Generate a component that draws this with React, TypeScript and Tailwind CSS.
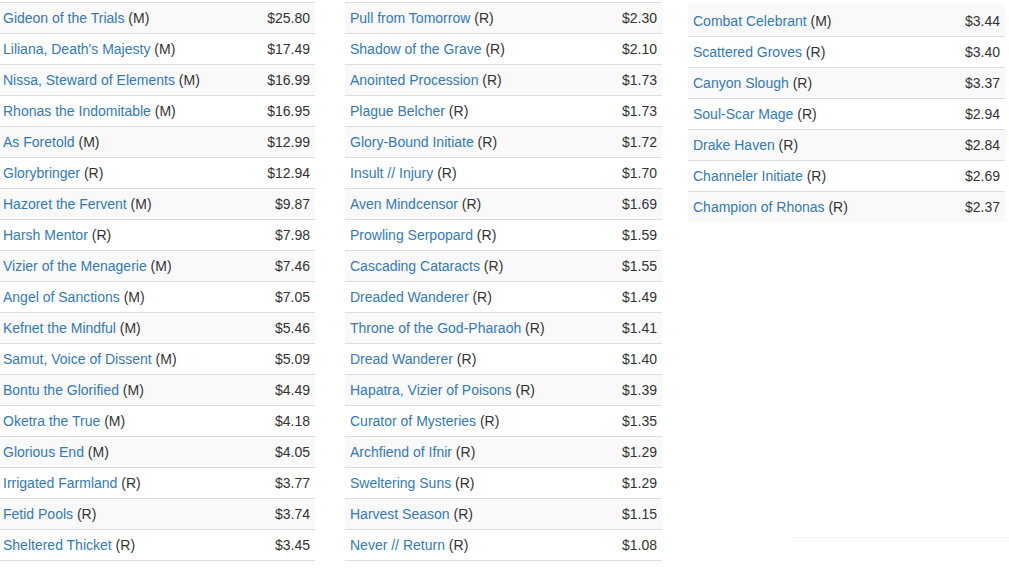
import React from "react";

type Card = { name: string; rarity: string; price: string };

const left: Card[] = [
  { name: "Gideon of the Trials", rarity: "M", price: "$25.80" },
  { name: "Liliana, Death's Majesty", rarity: "M", price: "$17.49" },
  { name: "Nissa, Steward of Elements", rarity: "M", price: "$16.99" },
  { name: "Rhonas the Indomitable", rarity: "M", price: "$16.95" },
  { name: "As Foretold", rarity: "M", price: "$12.99" },
  { name: "Glorybringer", rarity: "R", price: "$12.94" },
  { name: "Hazoret the Fervent", rarity: "M", price: "$9.87" },
  { name: "Harsh Mentor", rarity: "R", price: "$7.98" },
  { name: "Vizier of the Menagerie", rarity: "M", price: "$7.46" },
  { name: "Angel of Sanctions", rarity: "M", price: "$7.05" },
  { name: "Kefnet the Mindful", rarity: "M", price: "$5.46" },
  { name: "Samut, Voice of Dissent", rarity: "M", price: "$5.09" },
  { name: "Bontu the Glorified", rarity: "M", price: "$4.49" },
  { name: "Oketra the True", rarity: "M", price: "$4.18" },
  { name: "Glorious End", rarity: "M", price: "$4.05" },
  { name: "Irrigated Farmland", rarity: "R", price: "$3.77" },
  { name: "Fetid Pools", rarity: "R", price: "$3.74" },
  { name: "Sheltered Thicket", rarity: "R", price: "$3.45" },
];

const middle: Card[] = [
  { name: "Pull from Tomorrow", rarity: "R", price: "$2.30" },
  { name: "Shadow of the Grave", rarity: "R", price: "$2.10" },
  { name: "Anointed Procession", rarity: "R", price: "$1.73" },
  { name: "Plague Belcher", rarity: "R", price: "$1.73" },
  { name: "Glory-Bound Initiate", rarity: "R", price: "$1.72" },
  { name: "Insult // Injury", rarity: "R", price: "$1.70" },
  { name: "Aven Mindcensor", rarity: "R", price: "$1.69" },
  { name: "Prowling Serpopard", rarity: "R", price: "$1.59" },
  { name: "Cascading Cataracts", rarity: "R", price: "$1.55" },
  { name: "Dreaded Wanderer", rarity: "R", price: "$1.49" },
  { name: "Throne of the God-Pharaoh", rarity: "R", price: "$1.41" },
  { name: "Dread Wanderer", rarity: "R", price: "$1.40" },
  { name: "Hapatra, Vizier of Poisons", rarity: "R", price: "$1.39" },
  { name: "Curator of Mysteries", rarity: "R", price: "$1.35" },
  { name: "Archfiend of Ifnir", rarity: "R", price: "$1.29" },
  { name: "Sweltering Suns", rarity: "R", price: "$1.29" },
  { name: "Harvest Season", rarity: "R", price: "$1.15" },
  { name: "Never // Return", rarity: "R", price: "$1.08" },
];

const right: Card[] = [
  { name: "Combat Celebrant", rarity: "M", price: "$3.44" },
  { name: "Scattered Groves", rarity: "R", price: "$3.40" },
  { name: "Canyon Slough", rarity: "R", price: "$3.37" },
  { name: "Soul-Scar Mage", rarity: "R", price: "$2.94" },
  { name: "Drake Haven", rarity: "R", price: "$2.84" },
  { name: "Channeler Initiate", rarity: "R", price: "$2.69" },
  { name: "Champion of Rhonas", rarity: "R", price: "$2.37" },
];

const PriceTable = ({ cards, pl, bordered }: { cards: Card[]; pl: string; bordered: boolean }) => {
  return (
    <div className={bordered ? "border-b border-[#ddd]" : ""}>
      {cards.map((c, i) => (
        <div
          key={c.name}
          className={`flex h-[31px] items-center justify-between pr-[5px] pt-[1px] ${pl} ${
            i % 2 === 0 ? "bg-[#f9f9f9]" : "bg-white"
          } ${bordered || i > 0 ? "border-t border-[#ddd]" : ""}`}
        >
          <span>
            <a className="text-[#337ab7]">{c.name}</a> ({c.rarity})
          </span>
          <span>{c.price}</span>
        </div>
      ))}
    </div>
  );
};

export default function App() {
  return (
    <div className="relative h-[570px] w-[1009px] overflow-hidden bg-white font-['Liberation_Sans',Arial,sans-serif] text-[14px] text-[#333]">
      <div className="flex items-start pt-[2px]">
        {/* first column, slightly clipped on the left */}
        <div className="w-[315px]">
          <PriceTable cards={left} pl="pl-[3px]" bordered />
        </div>
        <div className="ml-[30px] w-[317px]">
          <PriceTable cards={middle} pl="pl-[5px]" bordered />
        </div>
        <div className="ml-[26px] mt-[3px] w-[317px]">
          <PriceTable cards={right} pl="pl-[5px]" bordered={false} />
        </div>
      </div>
      {/* stray rule bottom right */}
      <div className="absolute left-[792px] top-[537px] h-px w-[217px] bg-[#eee]" />
    </div>
  );
}
